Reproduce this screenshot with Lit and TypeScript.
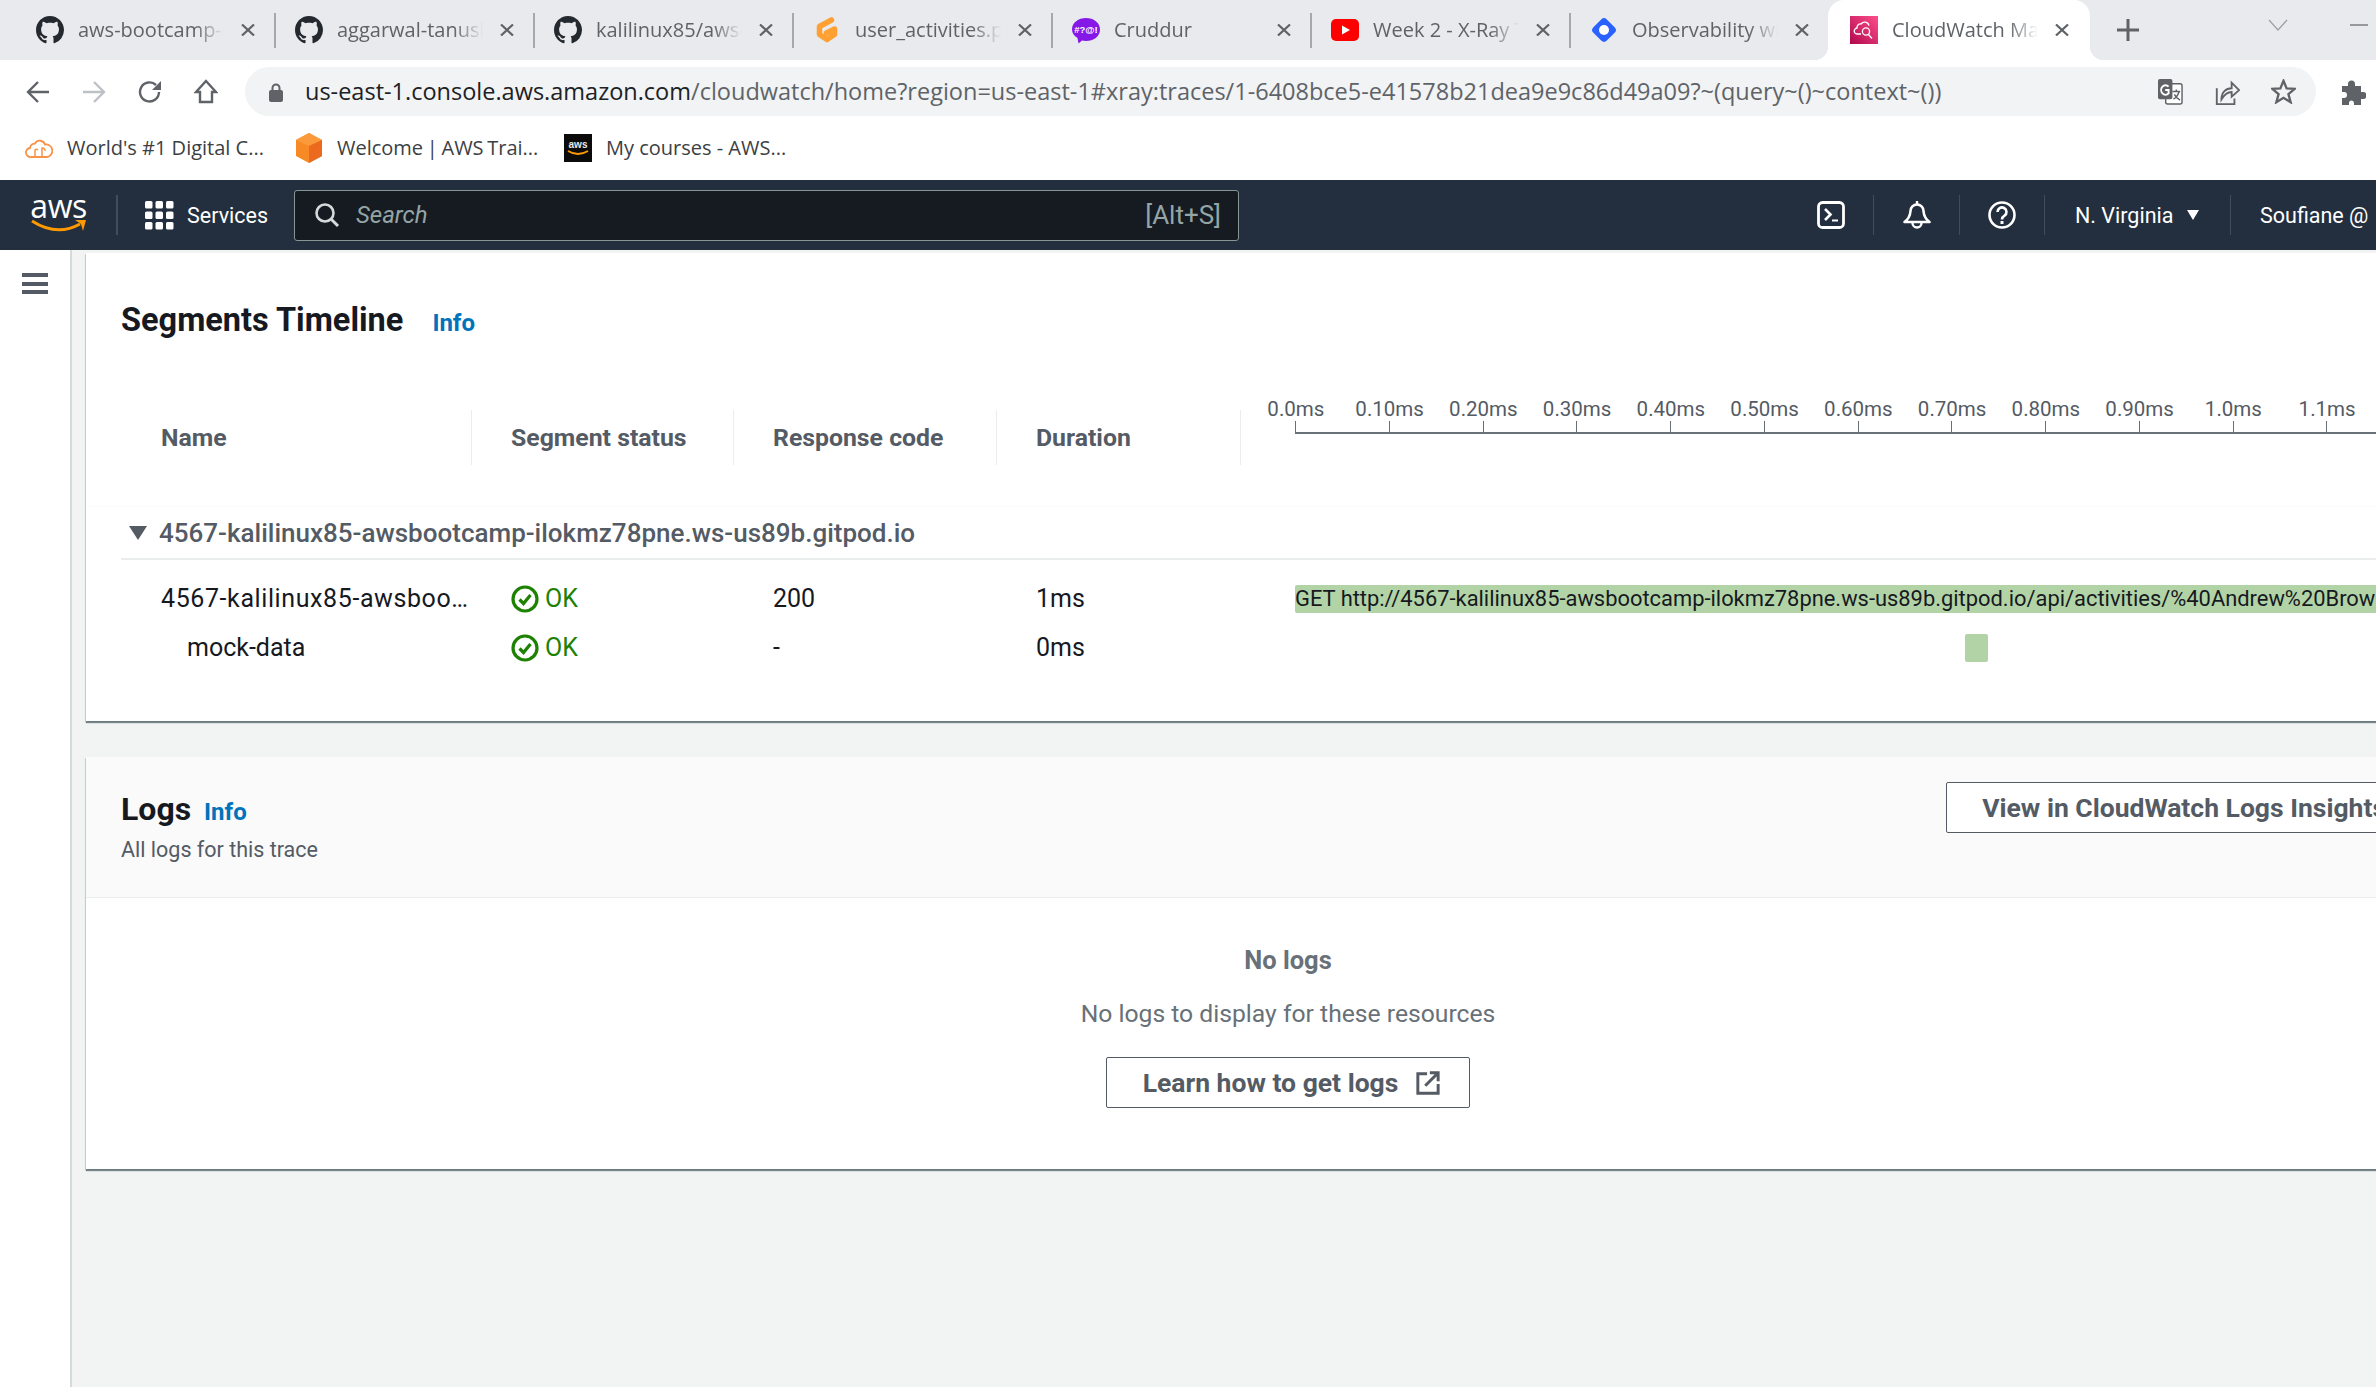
import { LitElement, html, css, svg, TemplateResult } from "lit";
import { customElement } from "lit/decorators.js";

const GH_PATH =
  "M8 0C3.58 0 0 3.58 0 8c0 3.54 2.29 6.53 5.47 7.59.4.07.55-.17.55-.38 0-.19-.01-.82-.01-1.49-2.01.37-2.53-.49-2.69-.94-.09-.23-.48-.94-.82-1.13-.28-.15-.68-.52-.01-.53.63-.01 1.08.58 1.23.82.72 1.21 1.87.87 2.33.66.07-.52.28-.87.51-1.07-1.78-.2-3.64-.89-3.64-3.95 0-.87.31-1.59.82-2.15-.08-.2-.36-1.02.08-2.12 0 0 .67-.21 2.2.82.64-.18 1.32-.27 2-.27.68 0 1.36.09 2 .27 1.53-1.04 2.2-.82 2.2-.82.44 1.1.16 1.92.08 2.12.51.56.82 1.27.82 2.15 0 3.07-1.87 3.75-3.65 3.95.29.25.54.73.54 1.48 0 1.07-.01 1.93-.01 2.2 0 .21.15.46.55.38A8.013 8.013 0 0016 8c0-4.42-3.58-8-8-8z";

const ghIcon = svg`<svg viewBox="0 0 16 16" width="28" height="28"><path fill="#24292f" d="${GH_PATH}"/></svg>`;
const gitpodIcon = svg`<svg viewBox="0 0 28 28" width="28" height="28">
  <path fill="none" stroke="#ffa033" stroke-width="5.500" stroke-linecap="round" stroke-linejoin="round" d="M18.500 4 L6.500 10.500 V18.500 L14 23.500 L21.500 18.500 V13 L13.500 17"/>
</svg>`;
const cruddurIcon = svg`<svg viewBox="0 0 28 28" width="28" height="28">
  <path fill="#8518e6" d="M14 2C21.500 2 28 6.500 28 13.500S21.500 25 14 25C12.500 25 11 24.800 10 24.500L6.500 27.500 5.500 22C2 20 0 17 0 13.500 0 6.500 6.500 2 14 2z"/>
  <text x="14" y="17" font-size="9.500" font-weight="700" fill="#fff" text-anchor="middle" font-family="Liberation Sans, sans-serif">#?@!</text>
</svg>`;
const youtubeIcon = svg`<svg viewBox="0 0 28 28" width="28" height="28">
  <rect x="0" y="3" width="28" height="22" rx="5" fill="#ff0000"/><path fill="#fff" d="M11 9.500 L19 14 L11 18.500z"/>
</svg>`;
const hashnodeIcon = svg`<svg viewBox="0 0 28 28" width="28" height="28">
  <rect x="4.500" y="4.500" width="19" height="19" rx="4" fill="#2962ff" transform="rotate(45 14 14)"/><circle cx="14" cy="14" r="5" fill="#fff"/>
</svg>`;
const cloudwatchIcon = svg`<svg viewBox="0 0 28 28" width="28" height="28">
  <defs><linearGradient id="cw" x1="0" y1="1" x2="1" y2="0"><stop offset="0" stop-color="#b0084d"/><stop offset="1" stop-color="#ff4f8b"/></linearGradient></defs>
  <rect width="28" height="28" fill="url(#cw)"/>
  <g fill="none" stroke="#fff" stroke-width="1.300">
    <path d="M11 18H7.500a3 3 0 0 1-.500-6 3.500 3.500 0 0 1 4-4 4.500 4.500 0 0 1 8 1.500"/>
    <circle cx="16" cy="15.500" r="3.600"/><path d="M18.500 18.500 L22 22.500"/>
  </g>
</svg>`;

const cloudMark = svg`<svg viewBox="0 0 28 24" width="28" height="24">
  <path fill="none" stroke="#f8934a" stroke-width="1.800" d="M6 21a4.500 4.500 0 0 1-1-9 5 5 0 0 1 5-4.500 5.500 5.500 0 0 1 10 1 5 5 0 0 1 2 12.500z"/>
  <path fill="none" stroke="#f8934a" stroke-width="1.500" d="M10 21V14a2 2 0 0 1 3 0M17 21V12a2.500 2.500 0 0 1 3 3"/>
</svg>`;
const boxMark = svg`<svg viewBox="0 0 28 30" width="28" height="30">
  <path fill="#f78a24" d="M14 0 L27 7 V23 L14 30 L1 23 V7z"/>
  <path fill="#fb9a3a" d="M14 0 L27 7 L14 13 L1 7z"/><path fill="#ec6a20" d="M14 13 L27 7 V23 L14 30z"/>
</svg>`;
const awsMark = svg`<svg viewBox="0 0 28 28" width="28" height="28">
  <rect width="28" height="28" fill="#0b0b0b"/>
  <text x="14" y="14" font-size="10" font-weight="700" fill="#e8e8e8" text-anchor="middle" font-family="Liberation Sans, sans-serif">aws</text>
  <path fill="none" stroke="#f90" stroke-width="2" d="M4 17q10 6 20 0"/>
</svg>`;

const okIcon = svg`<svg viewBox="0 0 28 28" width="28" height="28">
  <circle cx="14" cy="14" r="12" fill="none" stroke="#1d8102" stroke-width="3.200"/>
  <path fill="none" stroke="#1d8102" stroke-width="3.200" d="M8.500 14.500 L12.500 18.500 L19.500 10"/>
</svg>`;
const closeIcon = svg`<svg viewBox="0 0 14 12" width="14" height="12"><path stroke="#5f6368" stroke-width="2.200" d="M1 .5 L13 11.500 M13 .5 L1 11.500"/></svg>`;

interface BrowserTab { title: string; icon: TemplateResult; active?: boolean; noSep?: boolean; }

const TABS: BrowserTab[] = [
  { title: "aws-bootcamp-cruddur-2023", icon: ghIcon },
  { title: "aggarwal-tanushree/aws", icon: ghIcon },
  { title: "kalilinux85/aws-bootcamp", icon: ghIcon },
  { title: "user_activities.py - aws", icon: gitpodIcon },
  { title: "Cruddur", icon: cruddurIcon },
  { title: "Week 2 - X-Ray Tracing", icon: youtubeIcon },
  { title: "Observability with Honeycomb", icon: hashnodeIcon, noSep: true },
  { title: "CloudWatch Management", icon: cloudwatchIcon, active: true, noSep: true },
];

const TICKS = ["0.0ms", "0.10ms", "0.20ms", "0.30ms", "0.40ms", "0.50ms", "0.60ms", "0.70ms", "0.80ms", "0.90ms", "1.0ms", "1.1ms"];
const HOST = "4567-kalilinux85-awsbootcamp-ilokmz78pne.ws-us89b.gitpod.io";

@customElement("app-root")
export class AppRoot extends LitElement {
  static styles = css`
    :host {
      display: block;
      width: 2376px;
      height: 1387px;
      overflow: hidden;
      background: #fff;
      font-family: "Open Sans", "Noto Sans", sans-serif;
    }

    /* ── Chrome tab strip ─────────────────────────────────── */
    .tabs {
      display: flex;
      height: 60px;
      padding-left: 17px;
      background: #e8eaed;
      align-items: stretch;
    }
    .tab {
      position: relative;
      flex: none;
      width: 259px;
      display: flex;
      align-items: center;
      padding-left: 19px;
      box-sizing: border-box;
    }
    .tab svg { flex: none; display: block; }
    .tab-title {
      flex: none;
      width: 146px;
      margin: 0 2px 2px 14px;
      font-size: 20px;
      color: #5f6368;
      white-space: nowrap;
      overflow: hidden;
      -webkit-mask-image: linear-gradient(to right, #000 80%, transparent 100%);
      mask-image: linear-gradient(to right, #000 80%, transparent 100%);
    }
    .tab-close { flex: none; margin-left: 15px; display: flex; }
    .tab-sep {
      position: absolute;
      right: 0;
      top: 13px;
      height: 35px;
      width: 2px;
      background: #a5a8ad;
    }
    .tab.active {
      background: #fff;
      border-radius: 16px 16px 0 0;
      width: 262px;
      margin-left: -2px;
      padding-left: 22px;
    }
    .tab.active .tab-title { color: #5f6368; }
    .tab.active::before,
    .tab.active::after {
      content: "";
      position: absolute;
      bottom: 0;
      width: 14px;
      height: 14px;
    }
    .tab.active::before { left: -14px; background: radial-gradient(circle at 0 0, transparent 14px, #fff 14.5px); }
    .tab.active::after { right: -14px; background: radial-gradient(circle at 100% 0, transparent 14px, #fff 14.5px); }
    .new-tab { margin-left: 27px; align-self: center; display: flex; }
    .win-controls {
      margin-left: auto;
      display: flex;
      align-items: center;
      gap: 62px;
      padding: 0 8px 10px 0;
    }

    /* ── Chrome toolbar ───────────────────────────────────── */
    .toolbar {
      display: flex;
      align-items: center;
      height: 49px;
      padding: 7px 0 3px 10px;
      background: #fff;
    }
    .tool-btn {
      flex: none;
      width: 56px;
      display: flex;
      justify-content: center;
    }
    .omnibox {
      flex: none;
      width: 2071px;
      height: 49px;
      margin-left: 11px;
      border-radius: 25px;
      background: #f1f3f4;
      display: flex;
      align-items: center;
      padding-left: 24px;
      padding-right: 20px;
      box-sizing: border-box;
    }
    .url {
      margin: 0 0 1px 22px;
      flex: 1;
      font-size: 23.500px;
      color: #5f6368;
      white-space: nowrap;
    }
    .url b { font-weight: 400; color: #202124; }
    .omni-icons { display: flex; align-items: center; gap: 31px; }
    .puzzle { margin-left: 24px; display: flex; }

    /* ── Bookmarks ────────────────────────────────────────── */
    .bookmarks {
      display: flex;
      align-items: center;
      height: 57px;
      padding: 0 0 4px 25px;
      font-size: 20px;
      color: #3c4043;
    }
    .bm { display: flex; align-items: center; gap: 14px; white-space: nowrap; }
    .bm:nth-child(1) { width: 270px; }
    .bm:nth-child(2) { width: 269px; word-spacing: -1.500px; }
    .bm svg { flex: none; display: block; }

    /* ── AWS console nav ──────────────────────────────────── */
    .nav {
      display: flex;
      align-items: center;
      height: 70px;
      background: #232f3e;
      color: #fff;
      font-family: Roboto, sans-serif;
      font-size: 21.500px;
      overflow: hidden;
    }
    .nav-left { flex: none; width: 294px; display: flex; align-items: center; }
    .aws-logo {
      margin-left: 31px;
      width: 55px;
      height: 46px;
      display: flex;
      flex-direction: column;
      align-items: center;
    }
    .aws-word {
      font-family: "Open Sans", sans-serif;
      font-size: 32px;
      line-height: 26px;
      letter-spacing: -.5px;
      margin-top: 1px;
    }
    .nav-sep { flex: none; width: 1px; height: 40px; background: #414d5c; }
    .nav-left .nav-sep { margin-left: 30px; width: 2px; }
    .grid-icon { margin-left: 27px; display: block; flex: none; }
    .services { margin-left: 13px; }
    .search {
      flex: none;
      width: 945px;
      height: 51px;
      box-sizing: border-box;
      background: #161b22;
      border: 1px solid #879596;
      border-radius: 3px;
      display: flex;
      align-items: center;
      padding: 0 17px 0 19px;
      color: #95a5a6;
      font-size: 24px;
    }
    .search-ph { margin-left: 16px; font-style: italic; flex: 1; }
    .shortcut { font-size: 26px; }
    .nav-right {
      flex: none;
      width: 587px;
      margin-left: auto;
      display: flex;
      align-items: center;
      white-space: nowrap;
    }
    .nav-cell { flex: none; display: flex; justify-content: center; width: 84px; }
    .nav-cell.wide { width: 85px; }
    .region { flex: none; width: 185px; padding-left: 30px; box-sizing: border-box; display: flex; align-items: center; gap: 14px; }
    .caret { width: 0; height: 0; border-left: 6px solid transparent; border-right: 6px solid transparent; border-top: 10px solid #fff; }
    .user { padding-left: 29px; }

    /* ── Page body ────────────────────────────────────────── */
    .body {
      display: grid;
      grid-template-columns: 72px 1fr;
      height: 1137px;
      font-family: Roboto, sans-serif;
    }
    .side { background: #fff; border-right: 2px solid #d5dbdb; padding: 23px 0 0 22px; box-sizing: border-box; }
    .hamburger { display: flex; flex-direction: column; gap: 4.500px; width: 26px; }
    .hamburger i { display: block; height: 4px; background: #545b64; }
    .main {
      background: #f2f3f3;
      padding: 3px 0 0 14px;
      overflow: hidden;
      min-width: 0;
    }
    .card {
      width: 2404px;
      background: #fff;
      box-shadow: 0 2px 1px rgba(0, 28, 36, .5), -1px 1px 1px rgba(0, 28, 36, .1);
    }
    .seg-card { padding: 47px 0 49px; }
    .seg-title { display: flex; align-items: baseline; padding-left: 35px; gap: 29px; height: 40px; margin-bottom: 57px; }
    h2 { margin: 0; font-size: 32.500px; line-height: 40px; font-weight: 700; color: #16191f; }
    .info { font-size: 24px; font-weight: 700; color: #0073bb; }

    .cols {
      display: grid;
      grid-template-columns: 350px 262px 263px 244px 1fr;
      padding-left: 35px;
    }
    .th {
      margin-top: 13px;
      height: 55px;
      display: flex;
      align-items: center;
      font-size: 24.800px;
      font-weight: 700;
      color: #545b64;
      padding-left: 39px;
      border-left: 1px solid #eaeded;
    }
    .th.first { padding-left: 40px; border-left: none; }
    .axis-cell { border-left: 1px solid #eaeded; margin-top: 13px; height: 55px; padding-left: 54px; }
    .axis-labels {
      display: flex;
      margin: -13px 0 0 -46px;
      height: 24px;
      line-height: 24px;
      font-size: 20.500px;
      color: #545b64;
    }
    .axis-labels span { flex: none; width: 93.750px; text-align: center; }
    .axis-ticks { display: flex; border-bottom: 2px solid #687078; height: 11px; }
    .axis-ticks i { flex: none; width: 93.750px; border-left: 1px solid #687078; box-sizing: border-box; }

    .group { margin-top: 41px; border-top: 1px solid #fafafa; }
    .group-row {
      margin-left: 35px;
      height: 51px;
      border-bottom: 2px solid #eaeded;
      display: flex;
      align-items: center;
      font-size: 26px;
      font-weight: 500;
      color: #545b64;
    }
    .tri { width: 0; height: 0; margin: 0 12px 0 8px; border-left: 9px solid transparent; border-right: 9px solid transparent; border-top: 14px solid #545b64; }
    .rows { margin-top: 14px; }
    .row { height: 49px; align-items: center; font-size: 25px; color: #16191f; }
    .c-name { padding: 0 2px 0 40px; overflow: hidden; text-overflow: ellipsis; white-space: nowrap; letter-spacing: .6px; }
    .c-name.child { padding-left: 66px; letter-spacing: 0; }
    .c { padding-left: 40px; white-space: nowrap; }
    .ok { display: flex; align-items: center; gap: 6px; color: #1d8102; }
    .ok svg { display: block; }
    .c-bar { padding-left: 55px; min-width: 0; }
    .bar {
      height: 28px;
      line-height: 28px;
      background: #b2d3a6;
      border-radius: 2px;
      font-size: 21.900px;
      white-space: nowrap;
      overflow: hidden;
      color: #16191f;
    }
    .bar.tiny { width: 23px; margin-left: 670px; }

    .logs-card { margin-top: 36px; }
    .logs-head {
      height: 141px;
      box-sizing: border-box;
      background: #fafafa;
      border-bottom: 1px solid #eaeded;
      padding: 25px 68px 0 35px;
      display: flex;
      justify-content: space-between;
      align-items: flex-start;
    }
    .logs-title { display: flex; align-items: baseline; gap: 13px; margin-top: 7px; }
    .logs-title h2 { font-size: 32px; }
    .sub { margin-top: 6px; font-size: 21.500px; line-height: 30px; color: #545b64; }
    .btn {
      display: inline-flex;
      align-items: center;
      justify-content: center;
      height: 51px;
      box-sizing: border-box;
      padding: 0 35px;
      background: #fff;
      border: 1px solid #545b64;
      border-radius: 2px;
      font-family: inherit;
      font-size: 26.500px;
      font-weight: 700;
      color: #545b64;
      white-space: nowrap;
    }
    .btn.learn { padding: 0 29px 0 36px; }
    .logs-body {
      height: 271px;
      box-sizing: border-box;
      padding-top: 47px;
      display: flex;
      flex-direction: column;
      align-items: center;
      color: #687078;
      font-size: 24.700px;
      line-height: 30px;
    }
    .logs-body strong { font-weight: 700; font-size: 25.500px; }
    .logs-body p { margin: 24px 0 28px; }
    .btn svg { margin-left: 18px; display: block; }
  `;

  private _tab(t: BrowserTab) {
    return html`<div class="tab ${t.active ? "active" : ""}">
      ${t.icon}
      <span class="tab-title">${t.title}</span>
      <span class="tab-close">${closeIcon}</span>
      ${t.active || t.noSep ? "" : html`<span class="tab-sep"></span>`}
    </div>`;
  }

  private _chromeBars() {
    return html`
      <div class="tabs">
        ${TABS.map((t) => this._tab(t))}
        <span class="new-tab"><svg viewBox="0 0 22 22" width="22" height="22"><path stroke="#5f6368" stroke-width="3" d="M11 0V22M0 11H22"/></svg></span>
        <div class="win-controls">
          <svg viewBox="0 0 20 12" width="20" height="12"><path fill="none" stroke="#9aa0a6" stroke-width="1.200" d="M1 1 L10 11 L19 1"/></svg>
          <svg viewBox="0 0 18 2" width="18" height="2"><path stroke="#5f6368" stroke-width="1.200" d="M0 1H18"/></svg>
        </div>
      </div>
      <div class="toolbar">
        <span class="tool-btn"><svg viewBox="0 0 24 24" width="24" height="24"><path fill="none" stroke="#5f6368" stroke-width="2.400" d="M23 12H3M12 2 L2 12 L12 22"/></svg></span>
        <span class="tool-btn"><svg viewBox="0 0 24 24" width="24" height="24"><path fill="none" stroke="#bdc1c6" stroke-width="2.400" d="M1 12H21M12 2 L22 12 L12 22"/></svg></span>
        <span class="tool-btn"><svg viewBox="0 0 24 24" width="24" height="24"><path fill="none" stroke="#5f6368" stroke-width="2.400" d="M21 12a9.500 9.500 0 1 1-3-7"/><path fill="#5f6368" d="M23 1V10H14z"/></svg></span>
        <span class="tool-btn"><svg viewBox="0 0 24 26" width="24" height="26"><path fill="none" stroke="#5f6368" stroke-width="2.400" d="M12 2 L22 13 H18 V23 H6 V13 H2z"/></svg></span>
        <div class="omnibox">
          <svg viewBox="0 0 14 20" width="14" height="20"><path fill="none" stroke="#5f6368" stroke-width="2" d="M3.500 9V6a3.500 3.500 0 0 1 7 0V9"/><rect y="8" width="14" height="12" rx="2" fill="#5f6368"/></svg>
          <span class="url"><b>us-east-1.console.aws.amazon.com</b>/cloudwatch/home?region=us-east-1#xray:traces/1-6408bce5-e41578b21dea9e9c86d49a09?~(query~()~context~())</span>
          <span class="omni-icons">
            <svg viewBox="0 0 26 28" width="25" height="27"><rect x="8" y="6" width="17" height="21" rx="2" fill="#fff" stroke="#5f6368" stroke-width="1.500"/><rect x="0" y="1" width="15" height="21" rx="2" fill="#5f6368"/><path fill="none" stroke="#fff" stroke-width="2" d="M11 9a4.500 5 0 1 0 0 7V12.500H7.500"/><path fill="none" stroke="#5f6368" stroke-width="1.500" d="M15 14H23M19 12V14M22 14Q20 20 16 22M17 17Q19 21 23 23"/></svg>
            <svg viewBox="0 0 28 28" width="26" height="26"><path fill="none" stroke="#5f6368" stroke-width="2" d="M3 10V27H22V21"/><path fill="none" stroke="#5f6368" stroke-width="2" d="M8 22C8 14 13 10 19 10V4L27 12 19 19V14C14 14 11 17 8 22z"/></svg>
            <svg viewBox="0 0 28 28" width="25" height="25"><path fill="none" stroke="#5f6368" stroke-width="2.600" d="M14 2 L17.500 10.500 L26.500 11 L19.500 17 L22 26 L14 21 L6 26 L8.500 17 L1.500 11 L10.500 10.500z"/></svg>
          </span>
        </div>
        <span class="puzzle"><svg viewBox="0 0 26 26" width="26" height="26"><path fill="#5f6368" d="M2 7H8V5a3.500 3.500 0 0 1 7 0V7H21V13H23a3.500 3.500 0 0 1 0 7H21V26H14V24a2.500 2.500 0 0 0-5 0V26H2V19H4a3 3 0 0 0 0-6H2z"/></svg></span>
      </div>
      <div class="bookmarks">
        <div class="bm">${cloudMark}<span>World's #1 Digital C...</span></div>
        <div class="bm">${boxMark}<span>Welcome | AWS Trai...</span></div>
        <div class="bm">${awsMark}<span>My courses - AWS...</span></div>
      </div>`;
  }

  private _awsNav() {
    const gridDots = [0, 10.5, 21].flatMap((y) => [0, 10.5, 21].map((x) => svg`<rect x="${x}" y="${y}" width="7.500" height="7.500" rx="1.500"/>`));
    return html`<div class="nav">
      <div class="nav-left">
        <div class="aws-logo">
          <span class="aws-word">aws</span>
          <svg viewBox="0 0 56 14" width="56" height="14"><path fill="none" stroke="#f90" stroke-width="3" d="M1 2Q26 18 49 5"/><path fill="#f90" d="M44 1H55L52 12 50 5z"/></svg>
        </div>
        <span class="nav-sep"></span>
        <svg class="grid-icon" viewBox="0 0 29 29" width="29" height="29" fill="#fff">${gridDots}</svg>
        <span class="services">Services</span>
      </div>
      <div class="search">
        <svg viewBox="0 0 26 26" width="26" height="26"><circle cx="11" cy="11" r="8.500" fill="none" stroke="#d5dbdb" stroke-width="2.600"/><path stroke="#d5dbdb" stroke-width="3" d="M17 17 L24 24"/></svg>
        <span class="search-ph">Search</span>
        <span class="shortcut">[Alt+S]</span>
      </div>
      <div class="nav-right">
        <span class="nav-cell"><svg viewBox="0 0 28 28" width="28" height="28"><rect x="1.500" y="1.500" width="25" height="25" rx="4" fill="none" stroke="#fff" stroke-width="2.800"/><path fill="none" stroke="#fff" stroke-width="2.600" d="M8 8 L13.500 13.500 L8 19"/><path stroke="#fff" stroke-width="2" d="M15 19.500H21"/></svg></span>
        <span class="nav-sep"></span>
        <span class="nav-cell wide"><svg viewBox="0 0 28 30" width="28" height="30"><path fill="none" stroke="#fff" stroke-width="2.600" stroke-linejoin="round" d="M1.500 22 Q7 18 7.500 11 A6.500 6.500 0 0 1 20.500 11 Q21 18 26.500 22z"/><path fill="none" stroke="#fff" stroke-width="2.400" d="M14 4V1M9.500 23a4.500 4.500 0 0 0 9 0"/></svg></span>
        <span class="nav-sep"></span>
        <span class="nav-cell"><svg viewBox="0 0 28 28" width="28" height="28"><circle cx="14" cy="14" r="12.500" fill="none" stroke="#fff" stroke-width="2.600"/><path fill="none" stroke="#fff" stroke-width="2.600" d="M9.500 11a4.500 4.500 0 1 1 7 3.700c-1.600 1-2.500 1.800-2.500 3.800"/><rect x="12.500" y="20" width="3" height="3" fill="#fff"/></svg></span>
        <span class="nav-sep"></span>
        <span class="region"><span>N. Virginia</span><i class="caret"></i></span>
        <span class="nav-sep"></span>
        <span class="user">Soufiane @</span>
      </div>
    </div>`;
  }

  private _segments() {
    return html`<section class="card seg-card">
      <div class="seg-title"><h2>Segments Timeline</h2><span class="info">Info</span></div>
      <div class="cols">
        <div class="th first">Name</div>
        <div class="th">Segment status</div>
        <div class="th">Response code</div>
        <div class="th">Duration</div>
        <div class="axis-cell">
          <div class="axis-labels">${TICKS.map((t) => html`<span>${t}</span>`)}</div>
          <div class="axis-ticks">${TICKS.map(() => html`<i></i>`)}</div>
        </div>
      </div>
      <div class="group"><div class="group-row"><i class="tri"></i>${HOST}</div></div>
      <div class="rows">
        <div class="cols row">
          <div class="c-name">${HOST}</div>
          <div class="c ok">${okIcon}OK</div>
          <div class="c">200</div>
          <div class="c">1ms</div>
          <div class="c-bar"><div class="bar">GET http://${HOST}/api/activities/%40Andrew%20Brown</div></div>
        </div>
        <div class="cols row">
          <div class="c-name child">mock-data</div>
          <div class="c ok">${okIcon}OK</div>
          <div class="c">-</div>
          <div class="c">0ms</div>
          <div class="c-bar"><div class="bar tiny"></div></div>
        </div>
      </div>
    </section>`;
  }

  private _logs() {
    return html`<section class="card logs-card">
      <div class="logs-head">
        <div>
          <div class="logs-title"><h2>Logs</h2><span class="info">Info</span></div>
          <div class="sub">All logs for this trace</div>
        </div>
        <button class="btn">View in CloudWatch Logs Insights</button>
      </div>
      <div class="logs-body">
        <strong>No logs</strong>
        <p>No logs to display for these resources</p>
        <button class="btn learn">Learn how to get logs
          <svg viewBox="0 0 26 26" width="24" height="24"><path fill="none" stroke="#545b64" stroke-width="3.200" d="M12 3H2V24H24V14M10 16 L23 3M15 2H24V11"/></svg>
        </button>
      </div>
    </section>`;
  }

  render() {
    return html`
      ${this._chromeBars()}
      ${this._awsNav()}
      <div class="body">
        <aside class="side"><div class="hamburger"><i></i><i></i><i></i></div></aside>
        <main class="main">
          ${this._segments()}
          ${this._logs()}
        </main>
      </div>
    `;
  }
}

declare global {
  interface HTMLElementTagNameMap {
    "app-root": AppRoot;
  }
}
